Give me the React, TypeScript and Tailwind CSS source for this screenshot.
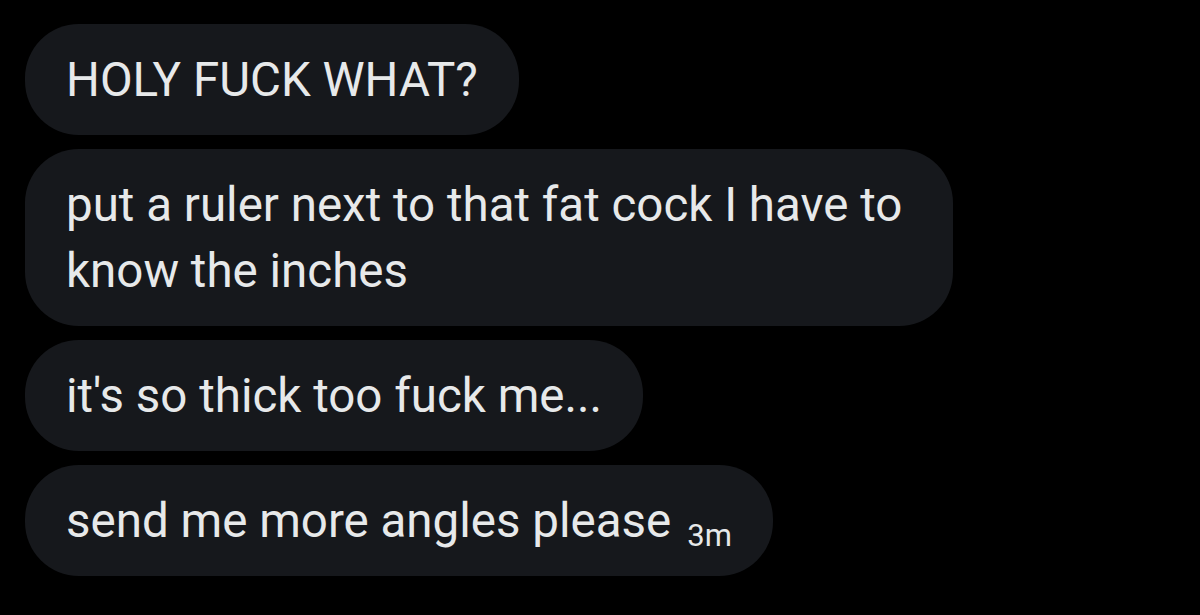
const messages = [
  { text: "HOLY FUCK WHAT?" },
  { text: "put a ruler next to that fat cock I have to know the inches" },
  { text: "it's so thick too fuck me..." },
  { text: "send me more angles please", time: "3m" },
];

export default function App() {
  return (
    <div className="w-[1200px] h-[615px] bg-black overflow-hidden pl-[25px] pt-[24px] [font-family:Roboto,'Liberation_Sans',sans-serif]">
      <div className="flex flex-col items-start gap-[14px]">
        {messages.map((m, i) => (
          <div
            key={i}
            className="max-w-[928px] bg-[#16181c] rounded-[54px] px-[41px] py-[22.5px] text-[#e7e9ea] text-[47.5px] leading-[66px]"
          >
            {m.text}
            {m.time && (
              <span className="inline-block ml-[16px] text-[31px] leading-none text-[#e7e9ea] translate-y-[9px]">
                {m.time}
              </span>
            )}
          </div>
        ))}
      </div>
    </div>
  );
}
